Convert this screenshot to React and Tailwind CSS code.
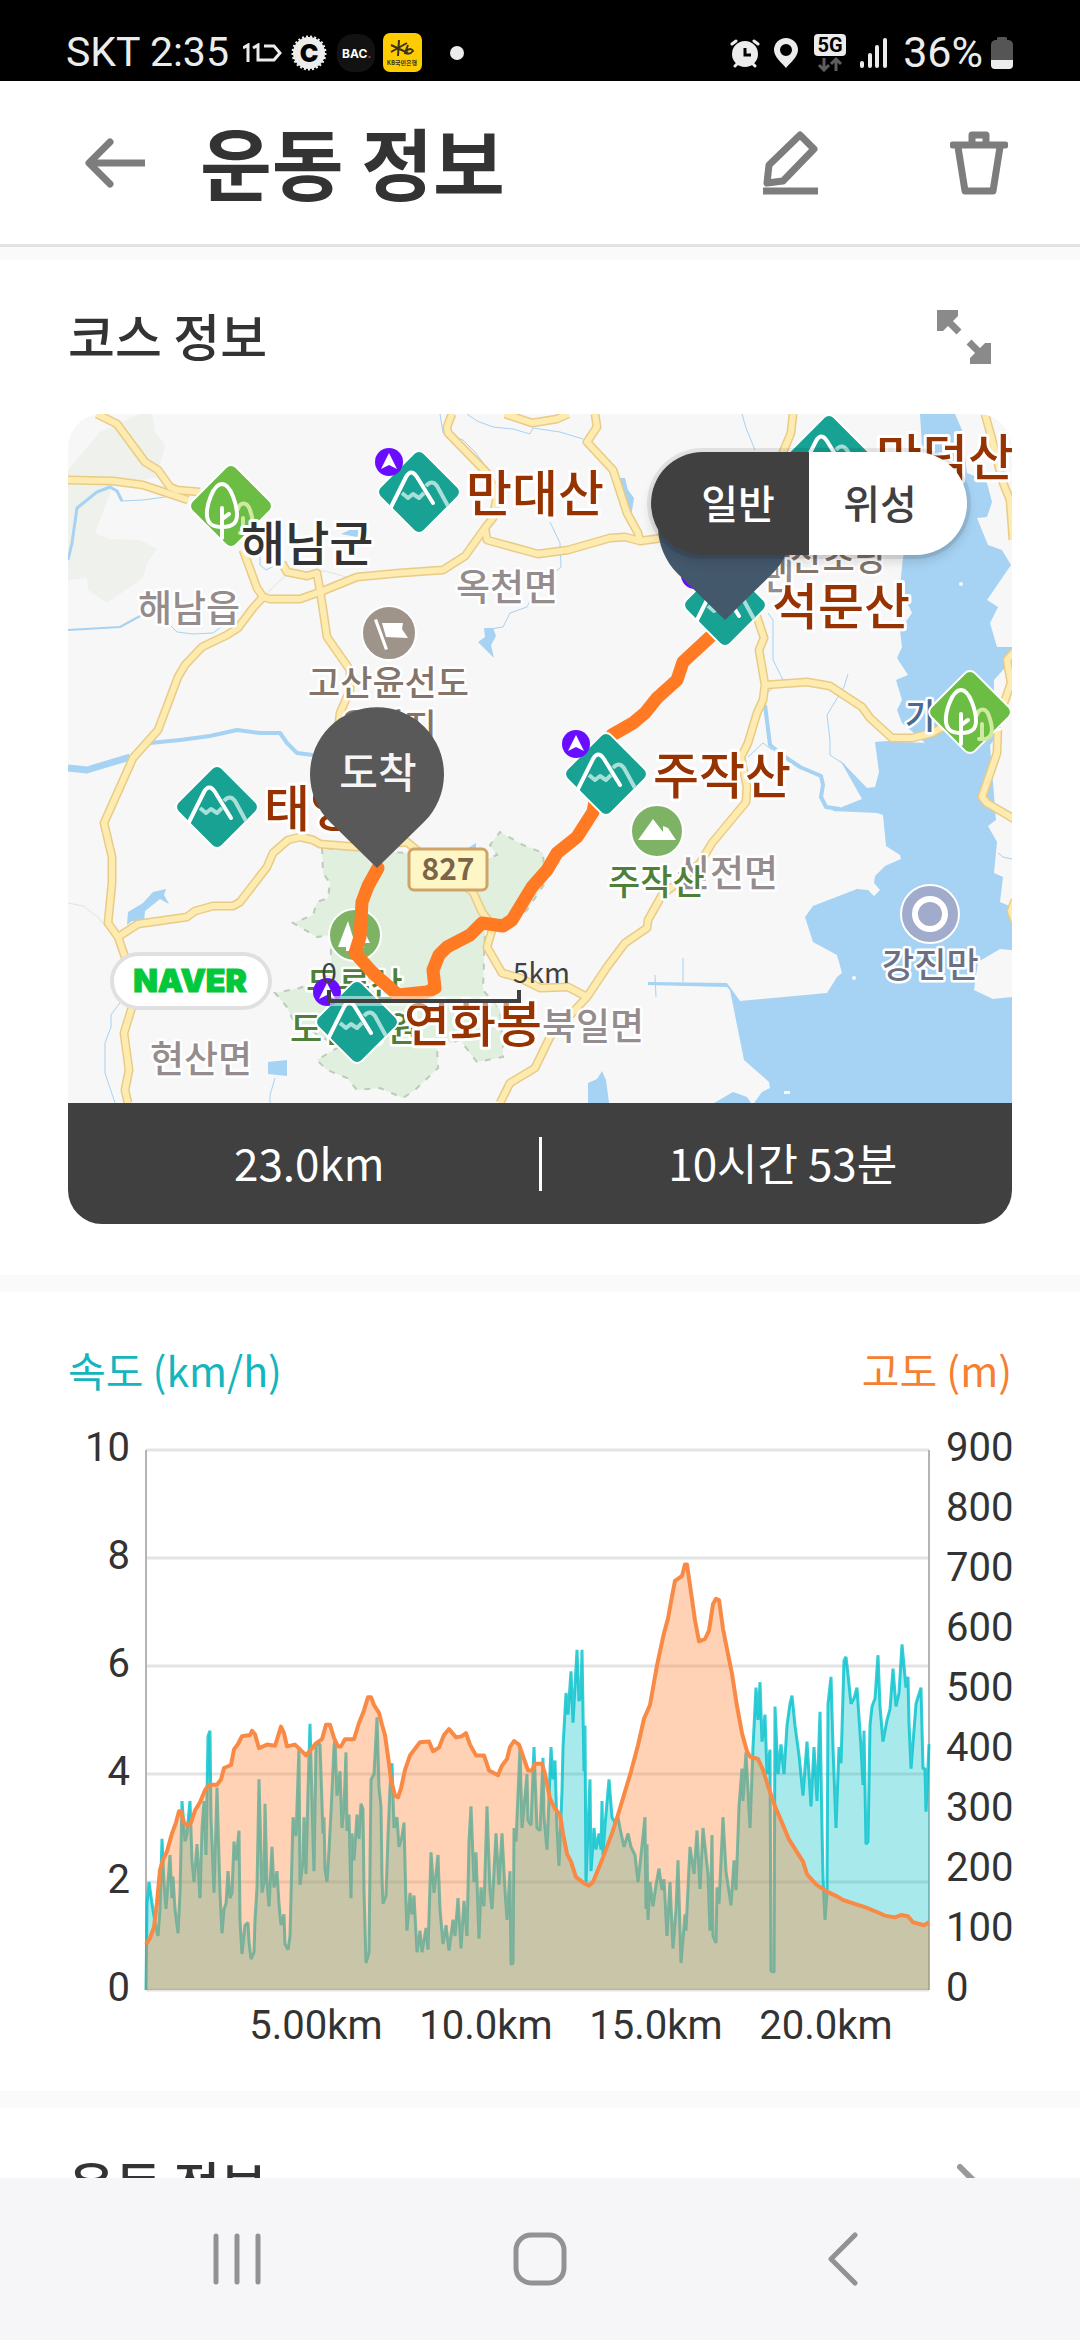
import React, { useState } from 'react'

// x is the offset along the plot, y the speed in km/h
const SPEED = [
  [0, 0], [1, 1.6], [3, 2], [6, 1.6], [9, 1.25], [12, 1], [14, 1.5], [16, 2.8], [18, 2], [20, 1.5], [24, 2.5], [26, 1.7],
  [27, 2.1], [29, 1.5], [32, 1.05], [34, 1.8], [36, 3.5], [39, 2.75], [41, 2.9], [44, 3.5], [46, 2.4], [48, 2], [51, 2.7],
  [54, 1.7], [56, 3], [58, 3.5], [60, 2.5], [62, 4.7], [64, 4.8], [65, 3.2], [68, 1.8], [71, 3.75], [74, 1.8], [76, 1.05],
  [78, 1.5], [80, 1.6], [82, 2.2], [84, 1.7], [86, 1.8], [88, 2.75], [90, 2.4], [93, 2.95], [94, 1.3], [96, 0.67],
  [99, 1.2], [102, 1.25], [103, 0.9], [105, 0.57], [108, 0.7], [109, 1.3], [111, 1.9], [113, 3.9], [116, 1.8], [118, 2],
  [119, 3.45], [121, 2], [123, 1.55], [126, 2.65], [128, 1.9], [131, 2.2], [133, 1.6], [135, 1.2], [138, 1.4],
  [139, 0.85], [142, 0.75], [144, 1], [147, 3.2], [150, 2.85], [153, 4.5], [154, 1.95], [157, 2.4], [158, 3.2],
  [160, 2.15], [162, 3.7], [164, 4.93], [167, 2.8], [168, 2.2], [170, 4.55], [174, 4.55], [177, 2.9], [178, 3.2],
  [179, 2.25], [181, 2], [183, 2.6], [185, 3.3], [188, 4.5], [189, 4.65], [191, 3.6], [194, 4.05], [196, 3], [198, 3.4],
  [200, 4.4], [201, 2.95], [203, 3.25], [205, 1.7], [206, 2.9], [208, 2.4], [211, 3.25], [213, 2.8], [215, 3.45],
  [217, 3.35], [218, 1.85], [220, 0.5], [223, 0.7], [225, 3.9], [228, 4], [229, 4.35], [231, 5.05], [233, 3.75],
  [235, 3.4], [236, 2.1], [237, 1.6], [240, 1.75], [242, 2.85], [244, 3.75], [246, 4.2], [248, 3], [251, 3.2],
  [253, 2.65], [256, 2.85], [258, 3.1], [260, 1.6], [261, 1.1], [264, 1.8], [266, 1.4], [268, 1.75], [271, 0.7],
  [274, 1.1], [276, 0.7], [280, 1.15], [282, 0.75], [285, 2.55], [288, 1.8], [292, 2.5], [294, 1.5], [297, 0.85],
  [300, 1.2], [303, 0.73], [307, 1.3], [309, 1], [312, 1.7], [315, 0.77], [318, 1.65], [321, 1], [323, 2.75],
  [325, 3.4], [328, 2], [330, 2.55], [333, 0.95], [335, 1.9], [338, 1.55], [341, 3.4], [344, 1.85], [346, 1.5],
  [350, 2.9], [353, 1.95], [356, 2.9], [359, 1.85], [361, 1.3], [364, 2.2], [365, 0.47], [367, 0.5], [368, 3],
  [370, 2.75], [374, 4.5], [376, 3], [381, 4], [382, 3.15], [385, 3.05], [388, 4.5], [391, 3], [394, 2.95], [397, 4.3],
  [398, 3.2], [401, 2.6], [405, 4.5], [407, 3.9], [409, 4.25], [411, 3], [413, 2.3], [416, 3.7], [417, 4.5],
  [420, 5.5], [422, 5.1], [425, 5.9], [427, 4.95], [431, 6.3], [433, 5.35], [435, 5.5], [436, 6.3], [438, 4.05],
  [439, 4.9], [440, 2], [442, 3], [444, 3.9], [445, 2.2], [448, 3], [450, 2.6], [453, 2.9], [455, 2.6], [456, 3.5],
  [457, 2.5], [459, 3.05], [463, 3.9], [466, 3.2], [469, 3.1], [472, 3.2], [474, 3], [478, 2.65], [482, 2.9],
  [485, 2.65], [489, 2.5], [492, 2], [495, 2.5], [499, 3.2], [500, 1.5], [501, 2.7], [502, 1.3], [504, 2], [507, 1.55],
  [510, 1.95], [513, 2.25], [516, 1.85], [518, 2.05], [521, 1], [524, 2], [527, 0.77], [530, 1.5], [532, 2.4],
  [535, 0.5], [539, 1.4], [540, 1.1], [541, 1.5], [544, 2.65], [548, 2.15], [551, 2.95], [554, 1.87], [557, 3],
  [562, 2.15], [564, 1.1], [566, 2.87], [567, 1], [570, 0.87], [571, 1.9], [573, 1.6], [577, 3.2], [580, 2.2],
  [585, 1.57], [588, 2.4], [590, 1.85], [593, 3.4], [596, 4.1], [597, 3.5], [600, 4.4], [604, 3], [607, 4.5],
  [610, 5.6], [612, 5], [614, 5.7], [616, 4.6], [619, 5.1], [621, 4], [624, 4.45], [625, 0.35], [628, 0.33],
  [629, 5.25], [632, 4], [635, 4.55], [638, 4], [641, 4.9], [644, 5.3], [646, 5.45], [649, 4.9], [653, 4.35],
  [657, 3.6], [661, 4.6], [665, 3.4], [668, 4.5], [671, 3.5], [674, 5.15], [676, 3], [677, 2.1], [679, 1.3],
  [681, 1.85], [682, 5.3], [685, 5.8], [687, 4.5], [690, 3], [693, 4.5], [695, 4.2], [698, 6.1], [700, 6.17],
  [702, 5.85], [705, 5.3], [708, 5.4], [711, 5.6], [715, 4.5], [717, 3.8], [718, 4.8], [720, 2.7], [722, 2.75],
  [724, 4.9], [726, 5.25], [729, 5.4], [732, 6.2], [734, 5.25], [737, 4.6], [741, 5], [744, 5.2], [747, 5.95],
  [750, 5.25], [753, 5.5], [756, 6.4], [760, 5.6], [762, 5.8], [763, 4.95], [765, 4.1], [770, 5.3], [775, 5.6],
  [777, 4.1], [779, 4.1], [780, 3.3], [783, 4.55],
]

// same x, altitude in metres
const ALTITUDE = [
  [0, 76], [4, 86], [8, 105], [11, 146], [14, 200], [17, 217], [21, 231], [26, 261], [30, 279], [33, 298], [35, 298],
  [38, 279], [42, 273], [45, 279], [49, 299], [54, 313], [59, 333], [63, 342], [71, 342], [75, 351], [78, 370],
  [85, 375], [88, 401], [92, 410], [96, 423], [104, 425], [106, 432], [109, 426], [113, 403], [121, 409], [129, 407],
  [133, 428], [135, 439], [138, 428], [141, 406], [149, 409], [154, 401], [160, 391], [164, 399], [170, 411],
  [176, 418], [180, 442], [184, 442], [188, 420], [192, 406], [195, 406], [199, 418], [208, 418], [213, 445],
  [218, 466], [222, 488], [225, 488], [228, 475], [233, 462], [236, 442], [239, 425], [243, 377], [245, 350],
  [249, 324], [252, 321], [255, 336], [259, 367], [264, 391], [269, 402], [274, 413], [283, 414], [287, 398],
  [293, 404], [298, 425], [303, 435], [310, 421], [316, 423], [320, 428], [324, 409], [330, 391], [338, 391],
  [343, 366], [352, 358], [356, 374], [361, 385], [364, 405], [368, 415], [373, 409], [378, 385], [382, 366],
  [386, 366], [389, 377], [396, 377], [399, 360], [404, 319], [409, 302], [414, 292], [417, 261], [421, 227],
  [425, 214], [430, 188], [438, 178], [443, 174], [447, 180], [457, 221], [466, 261], [472, 292], [485, 364],
  [492, 408], [498, 452], [504, 475], [511, 541], [518, 595], [522, 619], [526, 656], [529, 682], [536, 690],
  [539, 709], [541, 709], [545, 663], [549, 616], [553, 581], [559, 585], [563, 599], [567, 643], [570, 652],
  [573, 650], [577, 602], [581, 568], [586, 527], [591, 473], [596, 428], [601, 398], [604, 389], [612, 385],
  [617, 367], [622, 340], [629, 306], [637, 275], [643, 251], [657, 214], [661, 193], [670, 176], [681, 164],
  [691, 156], [697, 150], [708, 144], [719, 138], [731, 130], [739, 124], [749, 121], [755, 125], [762, 123],
  [767, 113], [778, 108], [783, 113],
]

const ROADS = [
  '97,414 117,424 145,462 158,470 170,487 177,490 200,492',
  '68,480 113,481 143,485 188,500',
  '243,550 257,588 263,597 270,599 300,599 320,592 357,577 400,573 443,570 465,556 485,528 493,518 497,495 487,473 448,433 447,427 452,414',
  '485,528 487,540 538,554 568,550 610,538 625,537 640,541 662,538 700,530',
  '595,414 597,427 587,442 613,470 627,513 638,533 640,541',
  '505,414 532,423 557,419 568,414',
  '793,414 791,433 783,452 775,480 750,580 757,617 764,638 759,650 765,685 763,700 757,713 748,743 741,757 747,787 746,802 712,843 700,863 676,884 662,895 648,920 647,928 625,943 607,967 587,997 550,1037 535,1068 510,1083 500,1103',
  '765,685 807,682 830,686 862,707 870,718 892,738 912,738 932,733 955,720',
  '985,414 993,443 1002,480 1010,500 1013,540',
  '1014,652 1007,660 1011,683 998,720 997,753 982,797 987,803 1014,819',
  '1015,900 1011,911 1015,922',
  '263,597 253,608 238,628 227,635 202,647 185,665 178,677 158,730 133,758 104,823 112,857 112,883 108,923 118,937 125,957 132,1007 124,1033 129,1070 125,1090 128,1103',
  '118,937 138,924 187,917 195,911 213,906 233,906 240,902 267,867 273,853 288,840 300,837 313,840 320,844 357,847 407,842 420,853 473,892 482,912 493,927 487,947 502,973 520,978 540,988 568,987 587,997',
  '282,563 287,572 307,576 317,573 322,603 327,637 350,670 350,690 340,713 338,730',
]

const STREAMS = [
  '122,501 143,500 165,497',
  '140,616 163,618 177,632 193,634 213,633 233,618',
  '440,414 443,433 463,440 475,452 490,472',
  '467,414 477,421 493,427 513,429 530,434 533,428 560,432 583,439',
  '550,522 560,543 561,567 537,587 527,607 510,613 503,627 490,629',
  '122,1000 111,1015 111,1027 105,1043 105,1073 115,1103',
  '260,550 260,565 266,570 280,563',
  '742,414 746,428 755,450',
  '768,613 773,620 773,660 783,680 768,692',
  '848,674 844,687 827,715 830,740 830,755 845,765',
  '748,757 763,743 772,750',
  '683,958 683,982',
  '655,975 656,997',
  '998,853 1003,857 1012,859',
  '275,1078 270,1095 270,1103',
]

const LABELS = [
  { text: '도암면', x: 693, y: 590, size: 'town' },
  { text: '다산초당', x: 758, y: 571, size: 'place', tone: 'fill-[#84746a]' },
  { text: '해남읍', x: 138, y: 622, size: 'town' },
  { text: '옥천면', x: 456, y: 601, size: 'town' },
  { text: '현산면', x: 150, y: 1073, size: 'town' },
  { text: '북일면', x: 542, y: 1040, size: 'town' },
  { text: '신전면', x: 676, y: 887, size: 'town' },
  { text: '고산윤선도', x: 308, y: 696, size: 'place', tone: 'fill-[#84746a]' },
  { text: '유적지', x: 340, y: 739, size: 'place', tone: 'fill-[#84746a]' },
  { text: '강진만', x: 882, y: 978, size: 'place', tone: 'fill-[#6b7085]' },
  { text: '가우도', x: 905, y: 729, size: 'place', tone: 'fill-[#4a6a94]' },
  { text: '주작산', x: 608, y: 895, size: 'place', tone: 'fill-[#4f8038]' },
  { text: '두륜산', x: 306, y: 998, size: 'place', tone: 'fill-[#4f8038]' },
  { text: '도립공원', x: 290, y: 1042, size: 'place', tone: 'fill-[#4f8038]' },
]

const MOUNTAINS = [
  { text: '만대산', x: 419, y: 492, tag: true },
  { text: '만덕산', x: 829, y: 456 },
  { text: '석문산', x: 725, y: 605, tag: true },
  { text: '주작산', x: 606, y: 774, tag: true },
  { text: '태영산', x: 217, y: 807 },
  { text: '연화봉', x: 357, y: 1022, tag: true },
]

const ROUTE =
  '722,625 710,637 683,662 677,680 657,698 645,713 633,723 612,735 600,775 593,812 577,837 557,853 547,870 532,887 512,920 503,926 482,923 470,935 447,947 439,955 433,970 435,988 427,992 398,995 373,973 355,953 360,937 362,902 368,886 378,868'

const Diamond = ({ className }) => (
  <rect
    x="-30" y="-30" width="60" height="60" rx="6"
    transform="rotate(45)"
    stroke="#fff" strokeWidth="4" paintOrder="stroke"
    className={className}
  />
)

const MountainPin = ({ x, y, tag }) => (
  <g transform={`translate(${x} ${y})`} fill="none">
    <Diamond className="fill-[#17a294]" />
    <g strokeWidth="4" strokeLinejoin="round">
      <path d="M-17 1 L-11 6 L-6 2 L0 6 L5 1 M7 -6 Q13 -13 18 -6 L29 14" stroke="#a9dfd9" />
      <path d="M-28 15 L-13 -15 Q-8 -24 -2 -15 L14 11" stroke="#fff" strokeLinecap="round" />
    </g>
    {tag && (
      <g transform="translate(-30 -30)">
        <circle r="14" fill="#6a0dff" />
        <path d="M0 -9 L8 7 L0 3 L-8 7 Z" fill="#fff" />
      </g>
    )}
  </g>
)

const TreePin = ({ x, y }) => (
  <g transform={`translate(${x} ${y})`} fill="none" strokeWidth="4" strokeLinecap="round">
    <Diamond className="fill-[#6bbd43]" />
    <path d="M7 3 C9 -4 16 -5 19 4 C22 13 25 25 15 27 H9 M12 12 V27" stroke="#cfe9a0" />
    <path d="M-9 -22 C-18 -22 -25 0 -24 10 C-23 19 -17 21 -9 21 C-1 21 6 19 6 9 C6 0 0 -22 -9 -22 Z M-9 2 V32 M-9 13 L-2 8" stroke="#fff" />
  </g>
)

const DropPin = ({ x, y, className }) => (
  <path
    transform={`translate(${x} ${y})`}
    d="M0 0 L-47 -46 A67 67 0 1 1 47 -46 Z"
    className={className}
  />
)

const CourseMap = () => (
  <svg viewBox="68 414 944 689" className="block w-full bg-[#f7f7f7]" role="img" aria-label="코스 지도">
    {/* hills */}
    <path d="M68 470 L100 432 L140 414 H152 L155 432 L165 445 L157 477 L113 485 L95 533 L108 539 L140 540 L157 549 L147 563 L143 578 L107 603 L88 590 L87 578 L68 580 Z" fill="#eff2ec" />

    {/* sea and lakes */}
    <g fill="#a6d2f3">
      <path d="M920 414 H955 L962 430 L967 473 L977 477 L987 483 L992 502 L987 517 L977 518 L988 545 L1002 550 L1011 565 L987 600 L998 607 L990 623 L997 647 H1012 V660 L994 680 V740 L990 745 L996 820 L988 826 L997 842 L994 873 L1003 877 L1000 902 L1012 907 V950 L1000 949 L978 962 L974 990 L993 999 L1012 997 V1103 H754 L762 1092 L770 1088 L769 1082 L744 1060 L730 990 L727 987 L648 985 V982 L727 983 L740 1001 L827 993 L837 977 L842 973 L837 955 L813 942 L805 917 L813 906 L857 889 L868 890 L874 896 L880 890 L874 883 L875 876 L885 866 L901 859 L900 855 L886 846 L883 815 L877 813 L832 811 L862 799 L840 760 L867 788 L875 787 L879 772 L875 742 L887 741 L925 743 L914 733 L902 723 L897 710 L902 700 L896 680 L908 675 L897 658 L902 647 L900 630 L912 613 L900 587 L903 557 L930 500 L922 447 Z" />
      <path d="M714 1103 L733 1092 L747 1097 L751 1103 Z" />
      <path d="M484 628 H493 L496 636 L491 645 L494 658 L478 642 L485 637 Z" />
      <path d="M620 478 H625 L628 490 L634 498 L631 517 L626 508 Z" />
      <path d="M127 925 L128 912 L143 903 L153 892 L166 889 L164 895 L169 904 L160 899 L145 911 L144 922 L132 921 Z" />
      <path d="M268 1062 L287 1060 V1076 L268 1074 Z" />
      <path d="M588 1103 V1083 L597 1079 L602 1071 L606 1080 L609 1103 Z" />
      <path d="M341 534 L352 529 L366 532 L357 537 Z" />
      <path d="M462 852 L476 843 V852 Z" />
    </g>
    <circle cx="961" cy="584" r="2" fill="#f7f7f7" />
    <circle cx="854" cy="978" r="2" fill="#f7f7f7" />
    <rect x="784" y="1091" width="6" height="3" fill="#f7f7f7" />

    {/* rivers */}
    <g fill="none" stroke="#a6d2f3" strokeLinejoin="round">
      <polyline points="68,560 72,543 77,508 97,492 110,487 117,491 122,501" strokeWidth="3" />
      <polyline points="68,630 120,627 140,616" strokeWidth="2" />
      <polyline points="150,743 180,740 210,736 237,730 260,733 280,733 287,743 297,753 313,755" strokeWidth="4" />
      <polyline points="68,768 87,770 110,763 130,757" strokeWidth="7" />
      <polyline points="765,705 770,745 785,757 800,767 821,776 823,785 821,797 826,807 840,809" strokeWidth="4" />
      {STREAMS.map((points) => (
        <polyline key={points} points={points} strokeWidth="1" />
      ))}
    </g>

    {/* provincial park */}
    <path
      d="M322 848 L323 873 L330 883 L328 898 L317 902 L313 915 L293 923 L317 937 L330 935 L332 973 L300 988 L275 993 L287 1007 L293 1020 L327 1040 L337 1048 L317 1060 L327 1070 L347 1078 L357 1090 L380 1088 L403 1098 L415 1090 L438 1068 L437 1047 L460 1040 L477 1062 L503 1057 L503 1045 L500 1010 L483 990 L485 930 L512 922 L527 910 L545 883 L543 853 L523 845 L500 832 L490 845 L497 855 L480 862 L408 853 Z"
      fill="#e1efdf" stroke="#bccbba" strokeWidth="2" strokeDasharray="6 8"
    />

    {/* roads */}
    <g fill="none" stroke="#e3e3e3" strokeWidth="1">
      <polyline points="68,903 83,906 98,917 108,930" />
      <polyline points="263,597 288,573 325,571 350,578" />
    </g>
    <g fill="none" strokeLinejoin="round">
      {ROADS.map((points) => (
        <polyline key={points} points={points} stroke="#e9cb86" strokeWidth="9" />
      ))}
      {ROADS.map((points) => (
        <polyline key={points} points={points} stroke="#fdebb0" strokeWidth="6" />
      ))}
    </g>

    {/* place symbols */}
    <g stroke="#fff" strokeWidth="2">
      <circle cx="389" cy="633" r="27" fill="#9f948a" />
      <circle cx="355" cy="935" r="26" fill="#7eb265" />
      <circle cx="657" cy="831" r="26" fill="#7eb265" />
      <circle cx="930" cy="914" r="29" fill="#a1abcb" />
      <circle cx="930" cy="914" r="15" fill="none" strokeWidth="6" />
    </g>
    <g fill="#fff">
      <path d="M374 620 l3 -1 l11 30 l-3 1 Z M382 623 h21 l-1 6 l6 9 l-22 -1 Z" />
      <path d="M348 921 L338 947 H346 V951 H350 V947 H356 Z M362 927 L353 943 H360 V948 H364 V943 H370 Z" />
      <path d="M638 840 L653 819 L663 832 V826 L668 828 L676 840 Z" />
    </g>

    <g className="font-['Noto_Sans_CJK_KR',sans-serif] font-medium" stroke="#fff" strokeWidth="5" strokeLinejoin="round" paintOrder="stroke">
      {LABELS.map(({ text, x, y, size, tone }) => (
        <text
          key={`${text}-${y}`} x={x} y={y}
          className={size === 'town' ? 'text-[37px] fill-[#958d8d]' : `text-[35px] ${tone}`}
        >
          {text}
        </text>
      ))}
    </g>

    <rect x="409" y="849" width="78" height="41" rx="5" fill="#fff6c6" stroke="#cfa469" strokeWidth="3" />
    <text x="448" y="880" textAnchor="middle" className="font-['Noto_Sans_CJK_KR',sans-serif] text-[30px] font-bold fill-[#7c6449]">827</text>

    <polyline points={ROUTE} fill="none" stroke="#ff7a22" strokeWidth="13" strokeLinejoin="round" strokeLinecap="round" />

    <TreePin x={231} y={506} />
    <g className="font-['Noto_Sans_CJK_KR',sans-serif] font-medium" stroke="#fff" strokeWidth="6" strokeLinejoin="round" paintOrder="stroke">
      <text x="241" y="561" className="text-[48px] fill-[#333]">해남군</text>
      {MOUNTAINS.map(({ text, x, y }) => (
        <text key={`${text}-${y}`} x={x + 47} y={y + 20} className="text-[50px] fill-[#963300]">{text}</text>
      ))}
    </g>
    {MOUNTAINS.map(({ text, x, y, tag }) => (
      <MountainPin key={`${text}-${y}`} x={x} y={y} tag={tag} />
    ))}
    <TreePin x={970} y={712} />

    {/* start and finish */}
    <DropPin x={725} y={620} className="fill-[#44586c]" />
    <DropPin x={377} y={868} className="fill-[#595959]" />
    <text x="378" y="788" textAnchor="middle" className="font-['Noto_Sans_CJK_KR',sans-serif] text-[42px] font-medium fill-[#f5f5f5]">도착</text>

    {/* scale */}
    <rect x="330" y="996" width="188" height="10" fill="#fff" opacity="0.5" />
    <path d="M329 990 V1001 H519 V990" fill="none" stroke="#404040" strokeWidth="4" />
    <g className="font-['Noto_Sans_CJK_KR',sans-serif] text-[28px] fill-[#404040]">
      <text x="329" y="983" textAnchor="middle">0</text>
      <text x="513" y="983">5km</text>
    </g>

    <rect x="112" y="954" width="158" height="54" rx="27" fill="#fff" stroke="#e0e0e0" strokeWidth="4" />
    <text x="190" y="992" textAnchor="middle" className="font-['Inter',sans-serif] text-[32px] font-black fill-[#03c83c]" stroke="#03c83c">NAVER</text>
  </svg>
)

const PLOT = { left: 78, top: 48, width: 783, height: 540 }

const toPoints = (data, max) =>
  data
    .map(([x, value]) => `${PLOT.left + x},${(PLOT.top + PLOT.height * (1 - value / max)).toFixed(1)}`)
    .join(' ')

const Chart = () => {
  const bottom = PLOT.top + PLOT.height
  const right = PLOT.left + PLOT.width
  const speed = toPoints(SPEED, 10)
  const altitude = toPoints(ALTITUDE, 900)
  const corners = `${right},${bottom} ${PLOT.left},${bottom}`

  return (
    <svg viewBox="0 0 944 689" className="block w-full" role="img" aria-label="속도와 고도 그래프">
      {[0, 2, 4, 6, 8, 10].map((tick) => {
        const y = bottom - (tick / 10) * PLOT.height
        return (
          <g key={tick}>
            <line x1={PLOT.left} x2={right} y1={y} y2={y} stroke="#e3e3e3" strokeWidth="3" />
            <text x="62" y={y + 11} textAnchor="end" className="font-['Roboto',sans-serif] text-[40px] fill-[#333]">{tick}</text>
          </g>
        )
      })}
      <path d={`M${PLOT.left} ${PLOT.top} V${bottom} M${right} ${PLOT.top} V${bottom}`} stroke="#b4b4b4" strokeWidth="2" />

      <polygon points={`${speed} ${corners}`} fill="#00c0c8" opacity="0.34" />
      <polyline points={speed} fill="none" stroke="#00c0cc" strokeWidth="3" strokeLinejoin="bevel" opacity="0.8" />
      <polygon points={`${altitude} ${corners}`} fill="#ff8a3d" opacity="0.38" />
      <polyline points={altitude} fill="none" stroke="#f98a45" strokeWidth="4" strokeLinejoin="round" />

      {[0, 100, 200, 300, 400, 500, 600, 700, 800, 900].map((tick) => (
        <text key={tick} x="878" y={bottom + 11 - (tick / 900) * PLOT.height} className="font-['Roboto',sans-serif] text-[40px] fill-[#333]">
          {tick}
        </text>
      ))}
      {['5.00km', '10.0km', '15.0km', '20.0km'].map((label, i) => (
        <text key={label} x={248 + i * 170} y="637" textAnchor="middle" className="font-['Roboto',sans-serif] text-[40px] fill-[#333]">
          {label}
        </text>
      ))}
    </svg>
  )
}

const StatusBar = () => (
  <div className="flex h-[81px] shrink-0 items-center justify-between bg-black pr-[67px] pl-[66px] pt-6 font-['Roboto',sans-serif] text-[41px] leading-none text-[#ececec]">
    <div className="flex items-center">
      <span>SKT 2:35</span>
      <svg viewBox="0 0 40 20" className="ml-3.5 h-5 w-10" fill="none" stroke="#ececec" strokeWidth="3">
        <path d="M0 5 L5 2 V19 M10 5 L15 2 V17 H31 L37 10 L31 3 H21" />
      </svg>
      <svg viewBox="0 0 36 36" className="ml-2 size-9">
        <circle cx="18" cy="18" r="16" fill="#ececec" />
        <circle cx="18" cy="18" r="16" fill="none" stroke="#ececec" strokeWidth="3" strokeDasharray="2 2" />
        <text x="18" y="27" textAnchor="middle" className="font-['Inter',sans-serif] text-[25px] font-black fill-black">C</text>
      </svg>
      <svg viewBox="0 0 38 38" className="ml-2.5 size-[38px]">
        <rect width="38" height="38" rx="16" fill="#121212" />
        <text x="5" y="24" className="font-['Inter',sans-serif] text-[12px] font-bold fill-white">BAC<tspan className="fill-[#d22]">.</tspan></text>
      </svg>
      <svg viewBox="0 0 39 39" className="ml-2 size-[39px]" fill="none" stroke="#3a3320" strokeWidth="2">
        <rect width="39" height="39" rx="7" fill="#fc0" stroke="none" />
        <path d="M16 7 L15 23 M8 12 L25 20 M24 10 L8 19 M25 12 L22 20 Q27 22 30 18 Q28 14 23 18" />
        <text x="19" y="32" textAnchor="middle" stroke="none" className="font-['Noto_Sans_CJK_KR',sans-serif] text-[6px] font-bold fill-[#3a3320]">KB국민은행</text>
      </svg>
      <span className="ml-7 size-3.5 rounded-full bg-[#ececec]" />
    </div>

    <div className="flex items-center">
      <svg viewBox="0 0 30 30" className="size-[30px]" fill="none" stroke="#ececec" strokeWidth="4" strokeLinecap="round">
        <circle cx="15" cy="16" r="13" fill="#ececec" stroke="none" />
        <path d="M2 6 L6 3 M28 6 L24 3" strokeWidth="3" />
        <path d="M5 28 L8 25 M25 28 L22 25" strokeWidth="3" />
        <path d="M15 10 V17 H21" stroke="#000" strokeWidth="3" strokeLinecap="butt" />
      </svg>
      <svg viewBox="0 0 24 30" className="ml-3.5 h-[30px] w-6">
        <path d="M12 0 A12 12 0 0 1 24 12 C24 19 16 25 12 30 C8 25 0 19 0 12 A12 12 0 0 1 12 0 Z M12 6 A6 6 0 1 0 12 18 A6 6 0 1 0 12 6 Z" fill="#ececec" fillRule="evenodd" />
      </svg>
      <svg viewBox="0 0 32 38" className="ml-4 h-[38px] w-8">
        <rect width="32" height="22" rx="4" fill="#ececec" />
        <text x="16" y="18" textAnchor="middle" className="font-['Roboto',sans-serif] text-[20px] font-bold fill-black">5G</text>
        <path d="M10 24 V36 M5 31 L10 36 L15 31 M22 37 V25 M17 30 L22 25 L27 30" stroke="#5e5e5e" strokeWidth="3" fill="none" />
      </svg>
      <svg viewBox="0 0 27 30" className="ml-3.5 h-[30px] w-[27px]" stroke="#ececec" strokeWidth="4" strokeLinecap="round">
        <path d="M2 25 V28 M10 17 V28 M17 9 V28 M25 2 V28" />
      </svg>
      <span className="ml-4 text-[43px]">36%</span>
      <svg viewBox="0 0 22 32" className="ml-2 h-8 w-[22px]">
        <path d="M6 1 Q6 0 8 0 H14 Q16 0 16 1 V3 H18 Q22 4 22 8 V23 H0 V8 Q0 4 4 3 H6 Z" fill="#555" />
        <path d="M0 23 H22 V28 Q22 32 18 32 H4 Q0 32 0 28 Z" fill="#ececec" />
      </svg>
    </div>
  </div>
)

const Header = () => (
  <header className="flex h-[166px] shrink-0 items-center border-b-3 border-[#e3e3e3] bg-white px-[72px]">
    <button aria-label="뒤로" className="ml-3">
      <svg viewBox="0 0 62 50" className="h-[50px] w-[62px]" fill="none" stroke="#7d7d7d" strokeWidth="7">
        <path d="M6 25 H61" />
        <path d="M26 4 L5 25 L26 46" strokeLinecap="round" strokeLinejoin="round" />
      </svg>
    </button>
    <h1 className="ml-[54px] flex-1 pb-1 font-['Noto_Sans_CJK_KR',sans-serif] text-[78px] leading-none font-bold text-[#333]">운동 정보</h1>
    <button aria-label="수정">
      <svg viewBox="0 0 56 64" className="h-16 w-14" fill="none" stroke="#7d7d7d" strokeWidth="7" strokeLinejoin="round">
        <path d="M37 4 L51 18 L20 50 L4 52 L6 34 Z" />
        <path d="M0 60 H55" />
      </svg>
    </button>
    <button aria-label="삭제" className="ml-[131px]">
      <svg viewBox="0 0 58 64" className="h-16 w-[58px]" fill="none" stroke="#7d7d7d" strokeWidth="7" strokeLinejoin="round" strokeLinecap="round">
        <path d="M3 14 H55 M22 13 V4 H36 V13 M8 16 L15 60 H43 L50 16" />
      </svg>
    </button>
  </header>
)

const SectionTitle = ({ title, children }) => (
  <div className="flex h-[154px] items-center justify-between pr-5">
    <h2 className="pb-1 font-['Noto_Sans_CJK_KR',sans-serif] text-[51px] leading-none font-medium text-[#333]">{title}</h2>
    {children}
  </div>
)

const App = () => {
  const [mapType, setMapType] = useState('normal')

  return (
    <div className="flex h-screen flex-col overflow-hidden bg-[#fafafa] font-['Noto_Sans_CJK_KR',sans-serif]">
      <StatusBar />
      <Header />

      <main className="flex-1 space-y-[17px] overflow-y-auto pt-[13px] [scrollbar-width:none]">
        <section className="bg-white px-[68px] pb-[51px]">
          <SectionTitle title="코스 정보">
            <button aria-label="지도 크게 보기">
              <svg viewBox="0 0 56 56" className="size-14" fill="#8a8a8a" stroke="#8a8a8a" strokeWidth="7">
                <path d="M8 8 L23 23 M48 48 L33 33" />
                <path d="M1 1 H22 V7 L7 22 H1 Z M55 55 H34 V49 L49 34 H55 Z" stroke="none" />
              </svg>
            </button>
          </SectionTitle>

          <div className="relative overflow-hidden rounded-[34px]">
            <CourseMap />
            <div className="absolute top-[38px] right-[45px] flex h-[103px] w-[316px] overflow-hidden rounded-full text-[40px] leading-none font-medium shadow-[0_0_0_4px_rgba(0,0,0,0.08),0_6px_12px_rgba(0,0,0,0.15)]">
              <button
                onClick={() => setMapType('normal')}
                className={`flex-1 pb-1 pl-4 ${mapType === 'normal' ? 'bg-[#404040] text-white' : 'bg-white text-[#404040]'}`}
              >
                일반
              </button>
              <button
                onClick={() => setMapType('satellite')}
                className={`flex-1 pr-4 pb-1 ${mapType === 'satellite' ? 'bg-[#404040] text-white' : 'bg-white text-[#404040]'}`}
              >
                위성
              </button>
            </div>
            <div className="flex h-[121px] items-center bg-[#404040] text-[44px] leading-none text-white">
              <span className="flex-1 pb-1 pl-3 text-center">23.0km</span>
              <span className="h-[54px] w-[3px] bg-white" />
              <span className="flex-1 pb-1 pl-3 text-center">10시간 53분</span>
            </div>
          </div>
        </section>

        <section className="bg-white px-[68px] pt-12">
          <div className="flex h-[62px] items-center justify-between pb-1 text-[41px] leading-none">
            <span className="text-[#14b5bd]">속도 (km/h)</span>
            <span className="text-[#f57f32]">고도 (m)</span>
          </div>
          <Chart />
        </section>

        <section className="bg-white px-[68px] pb-[51px]">
          <SectionTitle title="운동 정보">
            <button aria-label="운동 정보 더 보기">
              <svg viewBox="0 0 36 44" className="h-11 w-9" fill="none" stroke="#999" strokeWidth="6" strokeLinecap="round" strokeLinejoin="round">
                <path d="M4 4 L22 22 L4 40" />
              </svg>
            </button>
          </SectionTitle>
        </section>
      </main>

      <nav className="grid h-[162px] shrink-0 grid-cols-3 items-center justify-items-center bg-[#f6f6f8] px-[86px]">
        <button aria-label="최근 앱">
          <svg viewBox="0 0 50 54" className="h-[54px] w-[50px]" stroke="#929292" strokeWidth="5" strokeLinecap="round">
            <path d="M4 4 V50 M25 4 V50 M46 4 V50" />
          </svg>
        </button>
        <button aria-label="홈">
          <svg viewBox="0 0 54 54" className="size-[54px]" fill="none" stroke="#929292" strokeWidth="5">
            <rect x="3" y="3" width="48" height="48" rx="15" />
          </svg>
        </button>
        <button aria-label="이전">
          <svg viewBox="0 0 32 54" className="h-[54px] w-8" fill="none" stroke="#929292" strokeWidth="5" strokeLinecap="round" strokeLinejoin="round">
            <path d="M28 3 L4 27 L28 51" />
          </svg>
        </button>
      </nav>
    </div>
  )
}

export default App
